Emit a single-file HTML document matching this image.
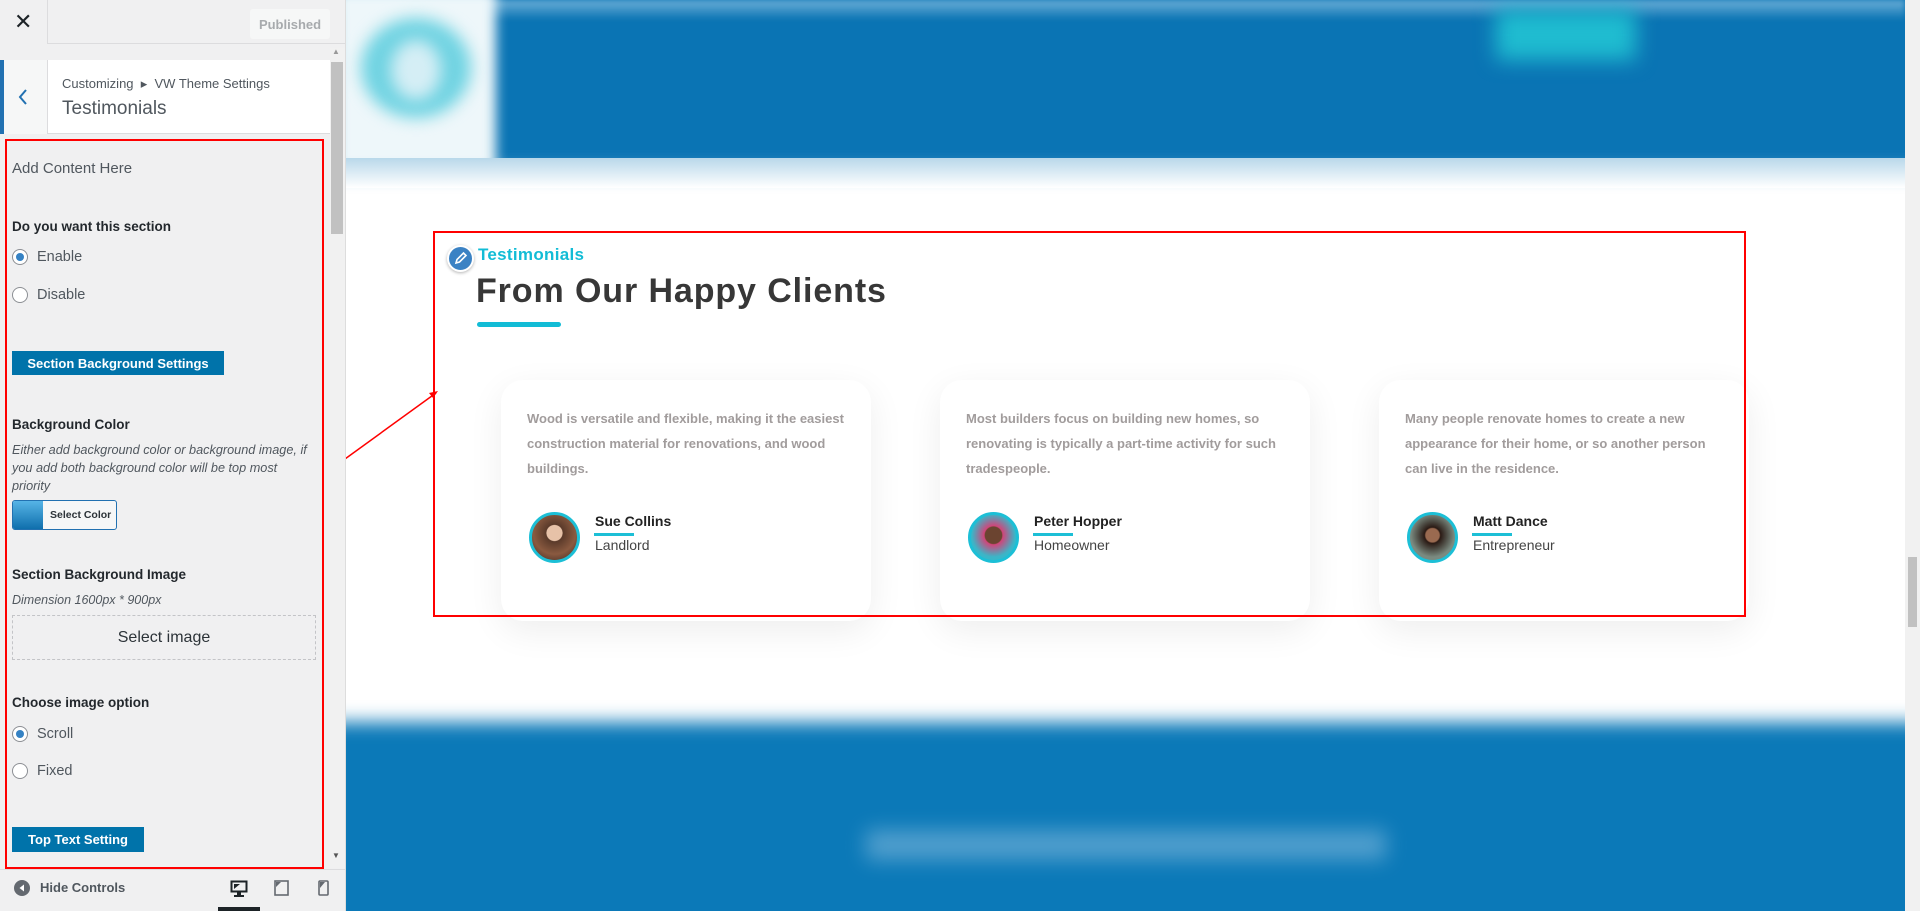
<!DOCTYPE html>
<html><head><meta charset="utf-8">
<style>
*{box-sizing:border-box;margin:0;padding:0}
body{width:1920px;height:911px;overflow:hidden;background:#fff;font-family:"Liberation Sans",sans-serif;position:relative}
.abs{position:absolute}
#side{left:0;top:0;width:346px;height:911px;background:#f0f0f1;border-right:1px solid #ddd;font-family:"Liberation Sans",sans-serif}
.t{position:absolute;white-space:nowrap}
.radio{position:absolute;width:16px;height:16px;border:1px solid #8c8f94;border-radius:50%;background:#fff;left:12px}
.radio.on::after{content:"";position:absolute;left:3px;top:3px;width:8px;height:8px;border-radius:50%;background:#3582c4}
.btn{position:absolute;background:#0073aa;color:#fff;font-weight:bold;font-size:13px;display:flex;align-items:center;justify-content:center;left:12px}
.lbl{font-weight:bold;font-size:13.5px;color:#23282d;left:12px}
.card{position:absolute;top:380px;width:370px;height:241px;background:#fff;border-radius:22px;box-shadow:0 10px 35px rgba(0,0,0,.07)}
.card p{position:absolute;left:26px;top:26px;width:322px;font-size:13px;line-height:25px;font-weight:bold;color:#a19c9c}
.av{position:absolute;left:28px;top:132px;width:51px;height:51px;border-radius:50%;border:3px solid #1cbfd6;overflow:hidden}
.nm{position:absolute;left:94px;top:133px;font-size:14px;font-weight:bold;color:#222}
.ul{position:absolute;left:93px;top:153px;width:40px;height:3px;background:#1cbfd6}
.rl{position:absolute;left:94px;top:157px;font-size:14px;color:#444}
</style></head><body>

<div class="abs" style="left:346px;top:0;width:1559px;height:911px;background:#fff;overflow:hidden">
  <div class="abs" style="left:-20px;top:-20px;width:1620px;height:192px;background:#0a74b4;filter:blur(9px)"></div>
  <div class="abs" style="left:0;top:0;width:1559px;height:20px;background:linear-gradient(#6fb0d8,rgba(10,116,180,0));filter:blur(3px)"></div>
  <div class="abs" style="left:-10px;top:-10px;width:160px;height:180px;background:#eef7fa;filter:blur(6px)"></div>
  <div class="abs" style="left:15px;top:18px;width:110px;height:100px;border-radius:50%;background:#6fd3e2;filter:blur(8px)"></div>
  <div class="abs" style="left:45px;top:40px;width:50px;height:60px;border-radius:50%;background:#d5eef5;filter:blur(8px)"></div>
  <div class="abs" style="left:1150px;top:10px;width:140px;height:50px;background:#1fbcd0;filter:blur(10px)"></div>
  <div class="abs" style="left:0;top:158px;width:1559px;height:30px;background:linear-gradient(#b9d8ea,#fff)"></div>
  <div class="abs" style="left:-20px;top:722px;width:1620px;height:220px;background:#0b79b8;filter:blur(9px)"></div>
  <div class="abs" style="left:520px;top:830px;width:520px;height:30px;background:#7fb8dc;filter:blur(10px);opacity:.6"></div>
</div>
<div class="abs" style="left:1905px;top:0;width:15px;height:911px;background:#f1f1f1"></div>
<div class="abs" style="left:1908px;top:557px;width:9px;height:70px;background:#c1c1c1"></div>

<div class="abs" style="left:447px;top:245px;width:27px;height:27px;border-radius:50%;background:#3b82c4;border:2px solid #fff;box-shadow:0 1px 3px rgba(0,0,0,.3)">
<svg width="23" height="23" viewBox="0 0 23 23"><path d="M7 16l1-3.5 6.5-6.5 2.5 2.5-6.5 6.5z" fill="none" stroke="#fff" stroke-width="1.6"/></svg></div>
<div class="t" style="left:478px;top:245px;font-size:17px;font-weight:bold;color:#12bcd6;letter-spacing:.3px">Testimonials</div>
<div class="t" style="left:476px;top:272px;font-size:34px;font-weight:bold;color:#373737;letter-spacing:.9px">From Our Happy Clients</div>
<div class="abs" style="left:477px;top:322px;width:84px;height:5px;border-radius:3px;background:#12bcd6"></div>

<div class="card" style="left:501px"><p>Wood is versatile and flexible, making it the easiest construction material for renovations, and wood buildings.</p>
<div class="av" style="background:radial-gradient(circle at 50% 40%,#e7c2a8 0 22%,#5a3a2a 24%,#8a5a40 60%,#3a2520)"></div><div class="nm">Sue Collins</div><div class="ul"></div><div class="rl">Landlord</div></div>
<div class="card" style="left:940px"><p>Most builders focus on building new homes, so renovating is typically a part-time activity for such tradespeople.</p>
<div class="av" style="background:radial-gradient(circle at 50% 45%,#6b4430 0 25%,#d0457a 28%,#3ab6c8 65%)"></div><div class="nm">Peter Hopper</div><div class="ul"></div><div class="rl">Homeowner</div></div>
<div class="card" style="left:1379px"><p style="width:318px">Many people renovate homes to create a new appearance for their home, or so another person can live in the residence.</p>
<div class="av" style="background:radial-gradient(circle at 50% 45%,#9a6a50 0 20%,#2a1a14 24%,#7a8a80 65%)"></div><div class="nm">Matt Dance</div><div class="ul"></div><div class="rl">Entrepreneur</div></div>

<div class="abs" style="left:433px;top:231px;width:1313px;height:386px;border:2px solid #f00"></div>
<svg class="abs" style="left:0;top:0" width="1920" height="911"><line x1="327" y1="472" x2="436" y2="393" stroke="#f00" stroke-width="1.5"/><path d="M438 391l-9 2 4 5z" fill="#f00"/></svg>

<div id="side" class="abs">
  <div class="t" style="left:14px;top:9px;font-size:22px;color:#1d2327">✕</div>
  <div class="abs" style="left:47px;top:0;width:1px;height:44px;background:#dcdcde"></div>
  <div class="abs" style="left:47px;top:43px;width:298px;height:1px;background:#dcdcde"></div>
  <div class="abs" style="left:250px;top:9px;width:80px;height:30px;background:#f6f7f7;border-radius:3px;color:#a7aaad;font-weight:bold;font-size:13px;display:flex;align-items:center;justify-content:center">Published</div>
  <div class="abs" style="left:0;top:60px;width:330px;height:74px;background:#fff;border-bottom:1px solid #dcdcde"></div>
  <div class="abs" style="left:0;top:60px;width:4px;height:74px;background:#2271b1"></div>
  <div class="abs" style="left:4px;top:60px;width:44px;height:74px;background:#f6f7f7;border-right:1px solid #dcdcde"></div>
  <svg class="abs" style="left:16px;top:88px" width="14" height="18"><path d="M10 2L4 9l6 7" fill="none" stroke="#2271b1" stroke-width="2"/></svg>
  <div class="t" style="left:62px;top:76px;font-size:13px;color:#50575e">Customizing &nbsp;▸ &nbsp;VW Theme Settings</div>
  <div class="t" style="left:62px;top:98px;font-size:19px;color:#50575e">Testimonials</div>
  <div class="abs" style="left:330px;top:48px;width:15px;height:820px;background:#f1f1f1"></div>
  <div class="abs" style="left:331px;top:62px;width:12px;height:172px;background:#c1c1c1"></div>
  <div class="t" style="left:332px;top:47px;font-size:8px;color:#999">▲</div>
  <div class="t" style="left:332px;top:851px;font-size:8px;color:#555">▼</div>

  <div class="abs" style="left:5px;top:139px;width:319px;height:730px;border:2px solid #f00"></div>
  <div class="t" style="left:12px;top:160px;font-size:15px;color:#50575e">Add Content Here</div>
  <div class="t lbl" style="top:219px">Do you want this section</div>
  <div class="radio on" style="top:249px"></div><div class="t" style="left:37px;top:249px;font-size:14.5px;color:#50575e">Enable</div>
  <div class="radio" style="top:287px"></div><div class="t" style="left:37px;top:287px;font-size:14.5px;color:#50575e">Disable</div>
  <div class="btn" style="top:351px;width:212px;height:24px">Section Background Settings</div>
  <div class="t lbl" style="top:417px">Background Color</div>
  <div class="abs" style="left:12px;top:441px;width:300px;font-size:12.7px;line-height:18px;font-style:italic;color:#50575e">Either add background color or background image, if you add both background color will be top most priority</div>
  <div class="abs" style="left:12px;top:500px;width:105px;height:30px;border:1px solid #2271b1;border-radius:3px;background:#f6f7f7;overflow:hidden">
    <div class="abs" style="left:0;top:0;width:30px;height:30px;background:linear-gradient(#56b4e6,#0a6aa8)"></div>
    <div class="t" style="left:37px;top:8px;font-size:10.5px;font-weight:bold;color:#2c3338">Select Color</div></div>
  <div class="t lbl" style="top:567px">Section Background Image</div>
  <div class="t" style="left:12px;top:593px;font-size:12.5px;font-style:italic;color:#50575e">Dimension 1600px * 900px</div>
  <div class="abs" style="left:12px;top:615px;width:304px;height:45px;border:1px dashed #c3c4c7;display:flex;align-items:center;justify-content:center;font-size:16px;color:#2c3338">Select image</div>
  <div class="t lbl" style="top:695px">Choose image option</div>
  <div class="radio on" style="top:726px"></div><div class="t" style="left:37px;top:726px;font-size:14.5px;color:#50575e">Scroll</div>
  <div class="radio" style="top:763px"></div><div class="t" style="left:37px;top:763px;font-size:14.5px;color:#50575e">Fixed</div>
  <div class="btn" style="top:827px;width:132px;height:25px">Top Text Setting</div>

  <div class="abs" style="left:0;top:869px;width:345px;height:42px;background:#f0f0f1;border-top:1px solid #dcdcde"></div>
  <div class="abs" style="left:14px;top:880px;width:16px;height:16px;border-radius:50%;background:#646970"></div>
  <svg class="abs" style="left:14px;top:880px" width="16" height="16"><path d="M10 4.5L5.5 8 10 11.5z" fill="#fff"/></svg>
  <div class="t" style="left:40px;top:880px;font-size:13px;font-weight:bold;color:#50575e">Hide Controls</div>
  <svg class="abs" style="left:230px;top:880px" width="18" height="17"><rect x="1.5" y="1.5" width="15" height="10" fill="none" stroke="#1d2327" stroke-width="2"/><path d="M4 4h6L4 9z" fill="#1d2327"/><rect x="7" y="12" width="4" height="3" fill="#1d2327"/><rect x="4" y="15" width="10" height="2" fill="#1d2327"/></svg>
  <div class="abs" style="left:218px;top:907px;width:42px;height:4px;background:#1d2327"></div>
  <svg class="abs" style="left:274px;top:880px" width="15" height="16"><rect x="1" y="1" width="13" height="14" fill="none" stroke="#646970" stroke-width="1.6"/><path d="M2 2h5L2 7z" fill="#646970"/></svg>
  <svg class="abs" style="left:318px;top:880px" width="11" height="16"><rect x="1" y="1" width="9" height="14" rx="1" fill="none" stroke="#646970" stroke-width="1.6"/><path d="M2 2h5L2 8z" fill="#646970"/></svg>
</div>
</body></html>
